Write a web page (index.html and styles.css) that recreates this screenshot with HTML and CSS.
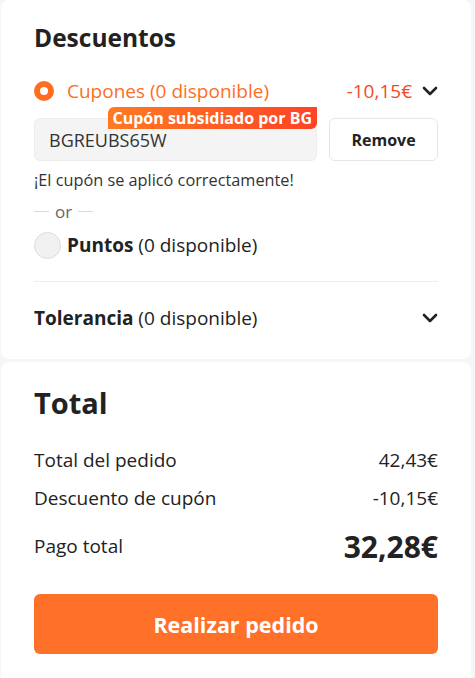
FILE: index.html
```html
<!DOCTYPE html>
<html lang="es">
<head>
    <meta charset="UTF-8">
    <meta name="viewport" content="width=device-width, initial-scale=1.0">
    <title>Descuentos</title>
    <link rel="stylesheet" href="styles.css">
</head>
<body>
    <div class="card discounts">
        <h2 class="card-title">Descuentos</h2>

        <div class="option-row">
            <span class="radio radio-on"></span>
            <span class="option-label active">Cupones (0 disponible)</span>
            <span class="option-amount">-10,15€</span>
            <svg class="chevron" viewBox="0 0 16 10"><path d="M2 2 L8 8 L14 2"/></svg>
        </div>

        <div class="coupon-box">
            <div class="coupon-input">
                BGREUBS65W
                <span class="coupon-badge">Cupón subsidiado por BG</span>
            </div>
            <button class="remove-btn">Remove</button>
        </div>

        <p class="coupon-msg">¡El cupón se aplicó correctamente!</p>

        <div class="or-sep"><span class="or-line"></span>or<span class="or-line"></span></div>

        <div class="option-row points">
            <span class="radio radio-off"></span>
            <span class="option-label"><b>Puntos</b> (0 disponible)</span>
        </div>

        <div class="divider"></div>

        <div class="option-row tolerance">
            <span class="option-label"><b>Tolerancia</b> (0 disponible)</span>
            <svg class="chevron" viewBox="0 0 16 10"><path d="M2 2 L8 8 L14 2"/></svg>
        </div>
    </div>

    <div class="card totals">
        <h2 class="card-title big">Total</h2>

        <div class="sum-row first">
            <span>Total del pedido</span>
            <span>42,43€</span>
        </div>
        <div class="sum-row">
            <span>Descuento de cupón</span>
            <span>-10,15€</span>
        </div>
        <div class="sum-row grand">
            <span>Pago total</span>
            <span class="grand-value">32,28€</span>
        </div>

        <button class="order-btn">Realizar pedido</button>
    </div>
</body>
</html>
```

FILE: styles.css
```css
body {
    margin: 0;
    padding: 0 4px 0 1px;
    background-color: #f6f6f6;
    font-family: "Open Sans", Arial, sans-serif;
    color: #222;
}

.card {
    background-color: #ffffff;
    border-radius: 8px;
    padding: 22px 33px 28px;
}

.discounts {
    margin-bottom: 3px;
}

.totals {
    padding-top: 22px;
    padding-bottom: 30px;
}

.card-title {
    margin: 0;
    font-size: 24.5px;
    line-height: 32px;
    font-weight: 700;
    color: #222;
}

.card-title.big {
    font-size: 29px;
    line-height: 38px;
}

.option-row {
    display: flex;
    align-items: center;
    height: 26px;
    margin-top: 24px;
}

.radio {
    box-sizing: border-box;
    width: 20px;
    height: 20px;
    border-radius: 50%;
    margin-right: 13px;
    flex-shrink: 0;
}

.radio-on {
    border: 6px solid #ff6d1f;
    background: #fff;
}

.radio-off {
    width: 27px;
    height: 27px;
    background: #f1f1f1;
    border: 1px solid #dcdcdc;
    margin-right: 6px;
}

.option-label {
    font-size: 19px;
    color: #222;
    flex: 1;
}

.option-label.active {
    color: #ff6d1f;
}

.option-label b {
    font-weight: 700;
}

.option-amount {
    font-size: 19px;
    color: #f34a1f;
    margin-right: 10px;
}

.chevron {
    width: 16px;
    height: 10px;
    fill: none;
    stroke: #222;
    stroke-width: 2.6;
    stroke-linecap: round;
    stroke-linejoin: round;
}

.coupon-box {
    display: flex;
    gap: 12px;
    margin-top: 14px;
}

.coupon-input {
    position: relative;
    flex: 1;
    height: 43px;
    box-sizing: border-box;
    background: #f4f4f4;
    border: 1px solid #ededed;
    border-radius: 6px;
    padding: 0 14px;
    display: flex;
    align-items: center;
    font-size: 18px;
    color: #333;
}

.coupon-badge {
    position: absolute;
    right: -1px;
    top: -12px;
    height: 22px;
    line-height: 22px;
    padding: 0 5px;
    border-radius: 6px 0 6px 0;
    background: linear-gradient(90deg, #ff7a22, #ff4326);
    color: #fff;
    font-size: 16px;
    font-weight: 700;
}

.remove-btn {
    width: 109px;
    height: 43px;
    background: #fff;
    border: 1px solid #e6e6e6;
    border-radius: 6px;
    font-family: inherit;
    font-size: 16px;
    font-weight: 700;
    color: #222;
}

.coupon-msg {
    margin: 9px 0 0;
    font-size: 16.3px;
    line-height: 20px;
    color: #333;
}

.or-sep {
    display: flex;
    align-items: center;
    gap: 6px;
    margin-top: 10px;
    height: 22px;
    font-size: 17px;
    color: #666;
}

.or-line {
    width: 15px;
    height: 1px;
    background: #d8d8d8;
}

.points {
    margin-top: 9px;
    height: 28px;
}

.divider {
    height: 1px;
    background: #ececec;
    margin-top: 22px;
}

.tolerance {
    margin-top: 23px;
}

.sum-row {
    display: flex;
    justify-content: space-between;
    align-items: center;
    height: 26px;
    margin-top: 12px;
    font-size: 19px;
    color: #222;
}

.sum-row.first {
    margin-top: 25px;
}

.sum-row.grand {
    margin-top: 15px;
    height: 40px;
}

.grand-value {
    font-size: 30px;
    font-weight: 700;
}

.order-btn {
    display: block;
    width: 100%;
    height: 60px;
    margin-top: 28px;
    border: none;
    border-radius: 6px;
    background: #ff7028;
    color: #fff;
    font-family: inherit;
    font-size: 21.5px;
    font-weight: 700;
}
```
